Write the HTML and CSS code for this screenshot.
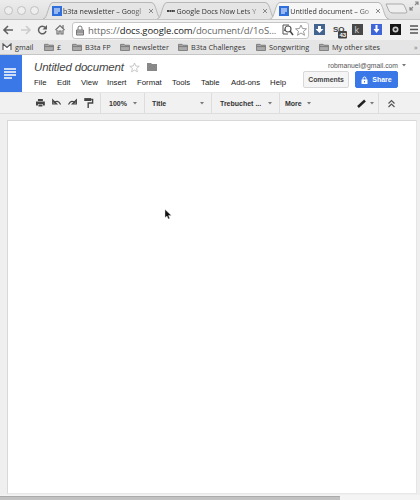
FILE: index.html
```
<!DOCTYPE html>
<html lang="en">
<head>
<meta charset="utf-8">
<title>Untitled document</title>
<link rel="stylesheet" href="styles.css">
</head>
<body>
<svg class="defs" width="0" height="0">
  <symbol id="folder" viewBox="0 0 11 9"><path d="M.5 8.5v-7h4l1 1h5v6zM.5 4h10" fill="#aaa" stroke="#777"/></symbol>
  <symbol id="doc" viewBox="0 0 10 10"><path fill="#2f6fdc" d="M0 0h10v10H0z"/><path d="M2 3h6M2 5h6M2 7h4" stroke="#fff"/></symbol>
  <symbol id="tabshape" viewBox="0 0 119 17"><path d="M0 17C5 17 5 0 10 .5H108C114 0 113 17 119 17" fill="currentColor" stroke="#aaa" stroke-width=".8"/></symbol>
  <symbol id="close" viewBox="0 0 6 6"><path d="M1 1l4 4M5 1L1 5" stroke="#888"/></symbol>
  <symbol id="caret" viewBox="0 0 4 3"><path d="M0 0h4L2 2.5z" fill="#777"/></symbol>
</svg>
<header class="tabs">
  <div class="lights"><i></i><i></i><i></i></div>
  <div class="tab"><svg class="shape"><use href="#tabshape"/></svg><svg class="fav"><use href="#doc"/></svg><span class="name">b3ta newsletter – Googl</span><svg class="x"><use href="#close"/></svg></div>
  <div class="tab"><svg class="shape"><use href="#tabshape"/></svg><svg class="fav" viewBox="0 0 10 10"><path d="M1 5h8" stroke="#444" stroke-width="2" stroke-dasharray="2 .4"/></svg><span class="name">Google Docs Now Lets Y</span><svg class="x"><use href="#close"/></svg></div>
  <div class="tab active"><svg class="shape"><use href="#tabshape"/></svg><svg class="fav"><use href="#doc"/></svg><span class="name">Untitled document – Go</span><svg class="x"><use href="#close"/></svg></div>
  <svg class="newtab" viewBox="0 0 24 11"><path d="M1 1h16q2 0 3 3l2 5q0 1-2 1H8Q5 10 4 8z" fill="#eee" stroke="#aaa"/></svg>
  <svg class="expand" viewBox="0 0 10 10"><path d="M6 1h3v3M9 1L6 4M4 9H1V6M1 9l3-3" fill="none" stroke="#888" stroke-width="1.2"/></svg>
</header>
<div class="nav">
  <svg class="navicons" viewBox="0 0 70 20">
    <path d="M13 10H4m4-4l-4 4 4 4" fill="none" stroke="#606060" stroke-width="1.6"/>
    <path d="M21 10h9m-4-4l4 4-4 4" fill="none" stroke="#ccc" stroke-width="1.6"/>
    <path d="M45.2 7.5A3.8 3.8 0 1 0 46 11" fill="none" stroke="#606060" stroke-width="1.5"/><path d="M47 5v4.500h-4.500z" fill="#606060"/>
    <path d="M55.500 10l4.500-4.500 4.500 4.500M57 10v4h2v-3h2v3h2v-4M63 5v3" fill="none" stroke="#707070" stroke-width="1.2"/>
  </svg>
  <div class="url">
    <svg class="lock" viewBox="0 0 8 11"><path d="M2 5V3q0-2 2-2t2 2v2" fill="none" stroke="#777"/><path d="M.5 5h7v5h-7zM1 7h6" fill="#bbb" stroke="#777"/></svg>
    <span class="address">https://<b>docs.google.com</b>/document/d/1oS...</span>
    <svg class="staricons" viewBox="0 0 28 14"><path d="M8 11H3V2h6M4 8l2-3" fill="none" stroke="#555"/><circle cx="8" cy="6" r="3" fill="#fff" stroke="#555" stroke-width="1.2"/><path d="M10 8l3 4" stroke="#444" stroke-width="1.500"/><path d="M21 2l1.500 3.500 4 .3-3 2.500 1 4L21 10l-3.500 2.300 1-4-3-2.500 4-.3z" fill="#fff" stroke="#999"/></svg>
  </div>
  <svg class="extensions" viewBox="0 0 108 20">
    <path d="M2 4h11v11H2z" fill="#42648e"/><path d="M6 6h3v3h2.500l-4 4-4-4H6z" fill="#fff"/>
    <text x="21" y="12" class="so">SO</text><rect x="26" y="11" width="9" height="7.500" rx="1" fill="#444"/><text x="27.500" y="17" class="count">43</text>
    <path d="M40 4h11v11H40z" fill="#484848"/><text x="42.500" y="13" class="kay">k</text>
    <path d="M59 4h11v11H59z" fill="#3f66d8"/><path d="M63.500 5h2v4h2l-3 4-3-4h2zM61 14h7" fill="#fff"/>
    <path d="M78 4h11v11H78z" fill="#161616"/><circle cx="83.500" cy="9.500" r="3" fill="#ccc"/><circle cx="83.500" cy="9.500" r="1.300" fill="#222"/>
    <path d="M98 6h8M98 9.500h8M98 13h8" stroke="#555" stroke-width="1.300"/>
  </svg>
</div>
<nav class="bookmarks">
  <span class="bm"><svg viewBox="0 0 11 9"><path d="M1 8V1l4.500 4L10 1v7" fill="#fff" stroke="#555" stroke-width="1.300"/></svg><span>gmail</span></span>
  <span class="bm"><svg><use href="#folder"/></svg><span>£</span></span>
  <span class="bm"><svg><use href="#folder"/></svg><span>B3ta FP</span></span>
  <span class="bm"><svg><use href="#folder"/></svg><span>newsletter</span></span>
  <span class="bm"><svg><use href="#folder"/></svg><span>B3ta Challenges</span></span>
  <span class="bm"><svg><use href="#folder"/></svg><span>Songwriting</span></span>
  <span class="bm"><svg><use href="#folder"/></svg><span>My other sites</span></span>
  <span class="more">»</span>
</nav>
<section class="head">
  <svg class="logo" viewBox="0 0 22 37"><path fill="#3b78e7" d="M0 0h22v37H0z"/><path d="M4 14h12M4 17h12M4 20h12M4 23h8" stroke="#fff" stroke-width="1.700"/></svg>
  <div class="docinfo">
    <div class="titleline"><h1>Untitled document</h1>
      <svg class="star" viewBox="0 0 11 11"><path d="M5.500 1l1.300 3 3.400.3-2.600 2.200.8 3.300-2.900-1.700-2.900 1.700.8-3.300L.8 4.300l3.400-.3z" fill="#fff" stroke="#bbb" stroke-width=".8"/></svg>
      <svg class="fold" viewBox="0 0 10 8"><path d="M0 0h4l1 1h5v7H0z" fill="#888"/></svg></div>
    <div class="menu"><span>File</span><span>Edit</span><span>View</span><span>Insert</span><span>Format</span><span>Tools</span><span>Table</span><span>Add-ons</span><span>Help</span></div>
  </div>
  <div class="account">
    <div class="email"><span>robmanuel@gmail.com</span><svg class="caret"><use href="#caret"/></svg></div>
    <div class="buttons"><span class="btn comments">Comments</span><span class="btn share"><svg viewBox="0 0 7 8"><path d="M2 4V2.500q0-1.500 1.500-1.500T5 2.500V4" fill="none" stroke="#fff"/><path d="M.5 3.500h6V8h-6z" fill="#fff"/><path d="M3 5h1v1.500H3z" fill="#3b78e7"/></svg><span>Share</span></span></div>
  </div>
</section>
<div class="tools">
  <svg class="actions" viewBox="0 0 66 22">
    <path d="M3 7h5v2H3zM1 9.500h9v4H8V12H3v1.500H1zM3.500 12.500h4v2h-4z" fill="#444"/>
    <path d="M18 8v4h4zM19 11q4-4 7 1.500" fill="none" stroke="#444" stroke-width="1.200"/>
    <path d="M42 8v4h-4zM41 11q-4-4-7 1.500" fill="none" stroke="#444" stroke-width="1.200"/>
    <path d="M50 6h7v3h-7z" fill="#444"/><path d="M57 7.500h1.500V11H54v5" fill="none" stroke="#444" stroke-width="1.400"/>
  </svg>
  <div class="drop zoom"><span>100%</span><svg class="caret"><use href="#caret"/></svg></div>
  <div class="drop style"><span>Title</span><svg class="caret"><use href="#caret"/></svg></div>
  <div class="drop font"><span>Trebuchet ...</span><svg class="caret"><use href="#caret"/></svg></div>
  <div class="drop others"><span>More</span><svg class="caret"><use href="#caret"/></svg></div>
  <div class="drop pen"><svg class="pencil" viewBox="0 0 9 9"><path d="M1 8L8 1.500" stroke="#222" stroke-width="2.500"/></svg><svg class="caret"><use href="#caret"/></svg></div>
  <div class="drop fold-up"><svg class="pencil" viewBox="0 0 9 9"><path d="M1.500 4.500l3-3 3 3m-6 3.500l3-3 3 3" fill="none" stroke="#555" stroke-width="1.200"/></svg></div>
</div>
<main class="canvas"><div class="page"></div></main>
<footer class="scroll"><div class="thumb"></div></footer>
<svg class="cursor" viewBox="0 0 8 11"><path d="M1 .5v8l2-1.500 1.300 3 1.400-.7L4.500 6.500h2.800z" fill="#111" stroke="#ddd" stroke-width=".4"/></svg>
</body>
</html>
```
FILE: styles.css
```
*{box-sizing:border-box}
body{margin:0;width:420px;height:500px;overflow:hidden;display:flex;flex-direction:column;background:#f2f2f2;font-family:"Liberation Sans",Arial,sans-serif;color:#333}
svg{display:block;flex:none}
span{white-space:nowrap}
.defs{position:absolute}
.tabs{height:20px;flex:none;display:flex;align-items:flex-end;background:linear-gradient(#ececec,#dedede);border-bottom:1px solid #c4c4c4;font-family:"Open Sans","Noto Sans",sans-serif}
.lights{display:flex;gap:4px;padding-left:4px;width:43px;height:18px;align-items:center}
.lights i{width:9px;height:9px;border:1px solid #c0c0c0;border-radius:50%;background:#eee}
.tab{position:relative;width:119px;height:17px;margin-right:-5px;display:flex;align-items:center;padding:0 0 0 9px;color:#e5e5e5}
.tab.active{color:#f6f6f6;height:18px;margin-bottom:-1px;margin-right:-5px}
.shape{position:absolute;left:0;top:0;width:119px;height:17px}
.fav{position:relative;width:10px;height:10px}
.name{position:relative;margin-left:1px;width:83px;font-size:7.100px;line-height:14px;color:#333;-webkit-mask-image:linear-gradient(90deg,#000 82%,#0005);mask-image:linear-gradient(90deg,#000 82%,#0005)}
.x{position:relative;width:6px;height:6px;margin-left:2px}
.newtab{width:24px;height:11px;margin:0 0 5px 1px}
.expand{width:10px;height:10px;margin:0 1px 8px auto}
.nav{height:20px;flex:none;display:flex;align-items:center;background:#f1f1f1}
.navicons{width:70px;height:20px}
.url{width:237px;height:17px;margin-left:2px;border:1px solid #c5c5c5;border-radius:3px;background:#fff;display:flex;align-items:center;padding-left:3px}
.lock{width:8px;height:11px}
.address{margin-left:4px;width:192px;font:9.500px/15px "Open Sans","Noto Sans",sans-serif;letter-spacing:-.09px;color:#666}
.address b{font-weight:500;color:#222}
.staricons{width:28px;height:14px}
.extensions{width:108px;height:20px;margin-left:3px}
.so{font:bold 8px "Liberation Sans",sans-serif;fill:#444}
.count{font:bold 6px "Liberation Sans",sans-serif;fill:#fff}
.kay{font:9px "Liberation Sans",sans-serif;fill:#ccc}
.bookmarks{height:15px;flex:none;display:grid;grid-template-columns:42px 28px 48px 58px 78px 63px 91px 1fr;padding-left:2px;align-items:center;background:#e5e5e5;border-bottom:1px solid #c6c6c6;font:7.300px/12px "Open Sans","Noto Sans",sans-serif}
.bm{display:flex;align-items:center;gap:3px}
.bm svg{width:10px;height:8px}
.more{color:#777;padding-left:4px}
.head{height:37px;flex:none;display:flex;background:#fff}
.logo{width:22px;height:37px}
.docinfo{width:281px;padding-left:12px}
.titleline{display:flex;align-items:center;height:22px;padding-top:2px}
h1{margin:0;width:94px;white-space:nowrap;font-size:11.500px;letter-spacing:-.17px;line-height:16px;font-style:italic;font-weight:400;color:#444}
.star{width:11px;height:11px;margin-left:1px}
.fold{width:10px;height:8px;margin-left:7px}
.menu{display:grid;grid-template-columns:23px 24px 26px 30px 35px 29px 30px 39px 20px;font-size:7.800px;line-height:12px;color:#222}
.account{width:117px;padding-top:5px}
.email{display:flex;align-items:center;justify-content:flex-end;gap:4px;height:10px;padding-right:14px;font-size:6.800px;color:#555}
.caret{width:4px;height:3px}
.buttons{display:flex;gap:6px;margin-top:1px}
.btn{height:17px;border:1px solid #d8d8d8;border-radius:2px;display:flex;align-items:center;justify-content:center;font-weight:700;font-size:7px}
.comments{width:46px;background:#f5f5f5;color:#444;font-size:6.900px}
.share{width:43px;gap:4px;background:#3b78e7;border-color:#3b78e7;color:#fff}
.share svg{width:7px;height:8px}
.tools{height:22px;flex:none;display:flex;align-items:center;padding-left:35px;background:#f1f1f1;border-top:1px solid #e6e6e6;border-bottom:1px solid #ddd}
.actions{width:65px;height:22px}
.drop{display:flex;align-items:center;justify-content:space-between;height:20px;font-size:7px;font-weight:700;color:#333;border-left:1px solid #ddd}
.zoom{width:44px;padding:0 7px 0 8px}
.style{width:67px;padding:0 7px}
.font{width:68px;padding:0 7px 0 8px}
.others{width:74px;padding-left:5px;justify-content:flex-start;gap:5px}
.pen{width:25px;border:0;padding:0 4px}
.fold-up{width:28px;padding-left:8px}
.pencil{width:9px;height:9px}
.canvas{height:381px;flex:none;padding:6px 3px 0 7px;background:#efefef}
.page{height:374px;background:#fff;border:1px solid #d8d8d8;border-right-color:#e5e5e5;border-bottom-color:#e8e8e8}
.scroll{height:5px;flex:none;padding-top:1px;background:#f4f4f4}
.thumb{width:340px;height:4px;background:#c2c2c2;border-top:1px solid #aaa}
.cursor{position:absolute;left:164px;top:209px;width:8px;height:11px}
```
